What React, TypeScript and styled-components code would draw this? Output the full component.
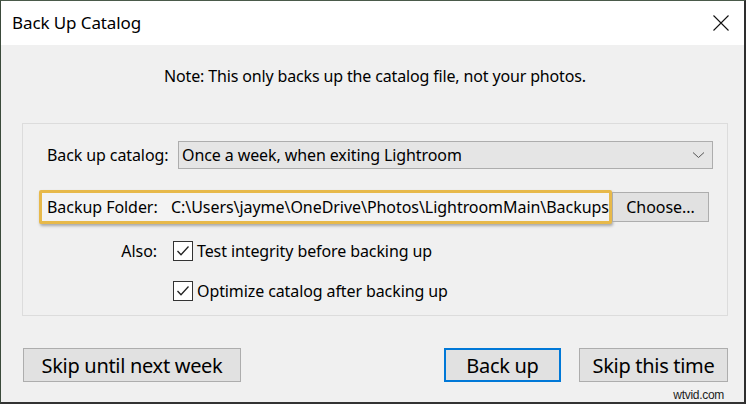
import React from "react";
import styled, { createGlobalStyle } from "styled-components";

const GlobalStyle = createGlobalStyle`
  html, body {
    margin: 0;
    padding: 0;
    background: #f0f0f0;
  }
  * {
    box-sizing: border-box;
  }
`;

const FONT = `"Noto Sans", "Open Sans", "Liberation Sans", sans-serif`;

function App(): React.ReactElement {
  return (
    <>
      <GlobalStyle />
      <Window>
        <TitleBar>
          <Title>Back Up Catalog</Title>
          <CloseButton aria-label="Close">
            <svg width="16" height="16" viewBox="0 0 16 16">
              <path d="M0.5 0.5 L15.5 15.5 M15.5 0.5 L0.5 15.5" stroke="#111" strokeWidth="1.1" fill="none" />
            </svg>
          </CloseButton>
        </TitleBar>
        <Body>
          <Note>Note: This only backs up the catalog file, not your photos.</Note>
          <Group>
            <CatalogRow>
              <Label>Back up catalog:</Label>
              <Select>
                <span>Once a week, when exiting Lightroom</span>
                <svg width="13" height="8" viewBox="0 0 13 8">
                  <path d="M1 1.5 L6.5 6.5 L12 1.5" stroke="#555" strokeWidth="1" fill="none" />
                </svg>
              </Select>
            </CatalogRow>
            <FolderRow>
              <FolderBox>
                <FolderLabel>Backup Folder:</FolderLabel>
                <FolderPath>C:\Users\jayme\OneDrive\Photos\LightroomMain\Backups</FolderPath>
              </FolderBox>
              <ChooseButton>Choose...</ChooseButton>
            </FolderRow>
            <CheckRow>
              <AlsoLabel>Also:</AlsoLabel>
              <Check />
              <CheckText>Test integrity before backing up</CheckText>
            </CheckRow>
            <CheckRow>
              <AlsoLabel />
              <Check />
              <CheckText>Optimize catalog after backing up</CheckText>
            </CheckRow>
          </Group>
          <Footer>
            <DialogButton>Skip until next week</DialogButton>
            <Spacer />
            <DialogButton $primary $width={117}>Back up</DialogButton>
            <DialogButton $width={149}>Skip this time</DialogButton>
          </Footer>
          <Watermark>wtvid.com</Watermark>
        </Body>
      </Window>
    </>
  );
}

function Check(): React.ReactElement {
  return (
    <CheckBox>
      <svg width="14" height="12" viewBox="0 0 14 12">
        <path d="M1.5 6 L5 9.8 L12.5 1.5" stroke="#222" strokeWidth="1.3" fill="none" />
      </svg>
    </CheckBox>
  );
}

export default App;

const Window = styled.div`
  position: relative;
  width: 746px;
  height: 404px;
  display: flex;
  flex-direction: column;
  background: #f0f0f0;
  border-left: 1px solid #3b4a3b;
  border-right: 2px solid #2e2e2e;
  border-bottom: 2px solid #333;
  border-top: 1px solid #4a5a4a;
  font-family: ${FONT};
  color: #000;
`;

const TitleBar = styled.div`
  height: 44px;
  background: #fff;
  display: flex;
  align-items: center;
  justify-content: space-between;
  padding: 0 15px 0 11px;
`;

const Title = styled.div`
  font-size: 17px;
  letter-spacing: -0.1px;
  padding-bottom: 2px;
`;

const CloseButton = styled.div`
  display: flex;
  width: 16px;
  height: 16px;
`;

const Body = styled.div`
  flex: 1;
  display: flex;
  flex-direction: column;
  padding: 20px 16px 0 21px;
`;

const Note = styled.div`
  text-align: center;
  font-size: 16px;
  letter-spacing: -0.15px;
  height: 22px;
  line-height: 22px;
`;

const Group = styled.div`
  margin-top: 36px;
  border: 1px solid #dcdcdc;
  padding: 17px 14px 14px 0;
  display: flex;
  flex-direction: column;
`;

const CatalogRow = styled.div`
  display: flex;
  align-items: center;
  height: 28px;
`;

const Label = styled.div`
  font-size: 16px;
  letter-spacing: -0.1px;
  padding-left: 24px;
  width: 155px;
  white-space: nowrap;
`;

const Select = styled.div`
  flex: 1;
  height: 28px;
  display: flex;
  align-items: center;
  justify-content: space-between;
  background: #e5e5e5;
  border: 1px solid #adadad;
  padding: 0 7px 0 3px;
  font-size: 16px;
  letter-spacing: -0.1px;
`;

const FolderRow = styled.div`
  display: flex;
  align-items: center;
  margin-top: 21px;
  height: 34px;
`;

const FolderBox = styled.div`
  margin-left: 16px;
  width: 573px;
  height: 34px;
  display: flex;
  align-items: center;
  border: 3px solid #e7b94a;
  border-radius: 2px;
  box-shadow: 1px 2px 3px rgba(0, 0, 0, 0.3);
  background: #f3f3f3;
  padding-left: 5px;
  overflow: hidden;
  font-size: 16px;
  letter-spacing: -0.05px;
  white-space: nowrap;
`;

const FolderLabel = styled.span`
  width: 124px;
  flex: none;
`;

const FolderPath = styled.span`
  overflow: hidden;
`;

const ChooseButton = styled.div`
  width: 97px;
  height: 30px;
  display: flex;
  align-items: center;
  justify-content: center;
  background: #e1e1e1;
  border: 1px solid #adadad;
  font-size: 16px;
  letter-spacing: -0.05px;
`;

const CheckRow = styled.div`
  display: flex;
  align-items: center;
  height: 20px;
  margin-top: 17px;
  & + & {
    margin-top: 20px;
  }
`;

const AlsoLabel = styled.div`
  width: 134px;
  text-align: right;
  font-size: 16px;
  letter-spacing: -0.05px;
  margin-right: 16px;
`;

const CheckBox = styled.div`
  width: 20px;
  height: 20px;
  border: 1px solid #333;
  background: #fff;
  display: flex;
  align-items: center;
  justify-content: center;
  flex: none;
`;

const CheckText = styled.div`
  margin-left: 4px;
  font-size: 16px;
  letter-spacing: -0.1px;
`;

const Footer = styled.div`
  display: flex;
  align-items: center;
  margin-top: 32px;
  gap: 18px;
  padding-left: 1px;
`;

const Spacer = styled.div`
  flex: 1;
`;

const DialogButton = styled.div<{ $primary?: boolean; $width?: number }>`
  width: ${(p) => (p.$width ? `${p.$width}px` : "218px")};
  height: 34px;
  display: flex;
  align-items: center;
  justify-content: center;
  background: #e1e1e1;
  border: ${(p) => (p.$primary ? "2px solid #0078d7" : "1px solid #adadad")};
  font-size: 20px;
  letter-spacing: -0.3px;
`;

const Watermark = styled.div`
  position: absolute;
  right: 20px;
  bottom: 0px;
  font-family: "Liberation Sans", Arial, sans-serif;
  font-size: 12px;
  color: #222;
  letter-spacing: -0.3px;
`;
